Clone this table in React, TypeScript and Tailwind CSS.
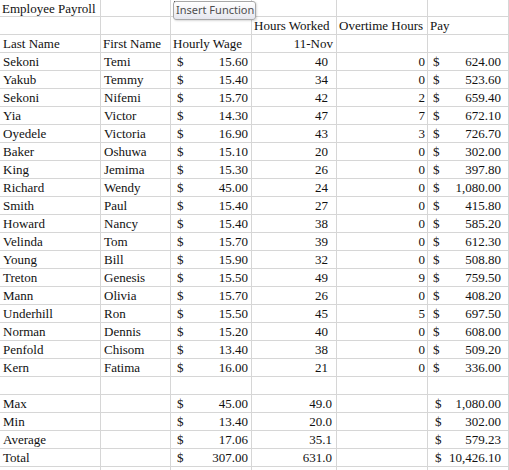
import React from 'react';

type Cell =
  | { t: 'text'; v: string; cls?: string }
  | { t: 'num'; v: string; cls?: string }
  | { t: 'money'; v: string; cls?: string }
  | { t: 'empty' };

const employees: [string, string, string, string, string, string][] = [
  ['Sekoni', 'Temi', '15.60', '40', '0', '624.00'],
  ['Yakub', 'Temmy', '15.40', '34', '0', '523.60'],
  ['Sekoni', 'Nifemi', '15.70', '42', '2', '659.40'],
  ['Yia', 'Victor', '14.30', '47', '7', '672.10'],
  ['Oyedele', 'Victoria', '16.90', '43', '3', '726.70'],
  ['Baker', 'Oshuwa', '15.10', '20', '0', '302.00'],
  ['King', 'Jemima', '15.30', '26', '0', '397.80'],
  ['Richard', 'Wendy', '45.00', '24', '0', '1,080.00'],
  ['Smith', 'Paul', '15.40', '27', '0', '415.80'],
  ['Howard', 'Nancy', '15.40', '38', '0', '585.20'],
  ['Velinda', 'Tom', '15.70', '39', '0', '612.30'],
  ['Young', 'Bill', '15.90', '32', '0', '508.80'],
  ['Treton', 'Genesis', '15.50', '49', '9', '759.50'],
  ['Mann', 'Olivia', '15.70', '26', '0', '408.20'],
  ['Underhill', 'Ron', '15.50', '45', '5', '697.50'],
  ['Norman', 'Dennis', '15.20', '40', '0', '608.00'],
  ['Penfold', 'Chisom', '13.40', '38', '0', '509.20'],
  ['Kern', 'Fatima', '16.00', '21', '0', '336.00'],
];

const summary: [string, string, string, string][] = [
  ['Max', '45.00', '49.0', '1,080.00'],
  ['Min', '13.40', '20.0', '302.00'],
  ['Average', '17.06', '35.1', '579.23'],
  ['Total', '307.00', '631.0', '10,426.10'],
];

const E: Cell = { t: 'empty' };

const GridCell = ({ cell }: { cell: Cell }) => {
  const base = 'border-r border-b border-[#d6d6d6] overflow-hidden whitespace-nowrap leading-[17px]';
  if (cell.t === 'empty') return <div className={base} />;
  if (cell.t === 'text') return <div className={`${base} pl-[2px] ${cell.cls ?? ''}`}>{cell.v}</div>;
  if (cell.t === 'num') return <div className={`${base} text-right ${cell.cls ?? 'pr-[3px]'}`}>{cell.v}</div>;
  return (
    <div className={`${base} flex justify-between pr-[3px] ${cell.cls ?? 'pl-[6px]'}`}>
      <span>$</span>
      <span>{cell.v}</span>
    </div>
  );
};

const Row = ({ cells, first }: { cells: Cell[]; first?: boolean }) => (
  <div className={`grid grid-cols-[101px_70px_81px_85px_91px_1fr] ${first ? 'h-[17px]' : 'h-[18px]'}`}>
    {cells.map((c, i) => (
      <GridCell key={i} cell={c} />
    ))}
  </div>
);

export default function App() {
  return (
    <div className="relative w-[509px] h-[470px] overflow-hidden bg-white text-[13px] text-[#111] font-['Liberation_Serif',serif]">
      <Row first cells={[{ t: 'text', v: 'Employee Payroll' }, E, E, E, E, E]} />
      <Row cells={[E, E, E, { t: 'text', v: 'Hours Worked' }, { t: 'text', v: 'Overtime Hours' }, { t: 'text', v: 'Pay' }]} />
      <Row
        cells={[
          { t: 'text', v: 'Last Name', cls: 'pl-[3px]' },
          { t: 'text', v: 'First Name' },
          { t: 'text', v: 'Hourly Wage' },
          { t: 'num', v: '11-Nov' },
          E,
          E,
        ]}
      />
      {employees.map((e, i) => (
        <Row
          key={i}
          cells={[
            { t: 'text', v: e[0], cls: 'pl-[3px]' },
            { t: 'text', v: e[1], cls: 'pl-[3px]' },
            { t: 'money', v: e[2] },
            { t: 'num', v: e[3], cls: 'pr-[8px]' },
            { t: 'num', v: e[4], cls: 'pr-[2px]' },
            { t: 'money', v: e[5], cls: 'pl-[5px] !pr-[7px]' },
          ]}
        />
      ))}
      <Row cells={[E, E, E, E, E, E]} />
      {summary.map((s, i) => (
        <Row
          key={i}
          cells={[
            { t: 'text', v: s[0], cls: 'pl-[3px]' },
            E,
            { t: 'money', v: s[1] },
            { t: 'num', v: s[2], cls: 'pr-[4px]' },
            E,
            { t: 'money', v: s[3], cls: 'pl-[7px] !pr-[7px]' },
          ]}
        />
      ))}
      <Row cells={[E, E, E, E, E, E]} />

      {/* tooltip over the sheet */}
      <div className="absolute left-[174px] top-[1px] w-[1px] h-[4px] bg-[#222]" />
      <div className="absolute left-[173px] top-[1px] w-[83px] h-[19px] rounded-[3px] border border-[#a8a8a8] bg-gradient-to-b from-white to-[#e6e7ef] shadow-[1px_1px_2px_rgba(0,0,0,0.15)] flex items-center pl-[2px] text-[11px] text-[#4d4d4d] font-['Noto_Sans',sans-serif] whitespace-nowrap">
        Insert Function
      </div>
    </div>
  );
}
